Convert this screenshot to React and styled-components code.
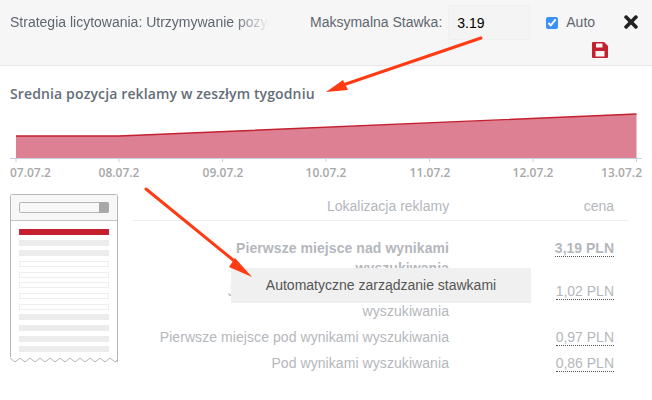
import React from 'react'
import styled, { createGlobalStyle } from 'styled-components'
import { FaTimes } from 'react-icons/fa'

const GlobalStyle = createGlobalStyle`
  html, body { margin: 0; background: #fff; }
  body { font-family: "Liberation Sans", Arial, sans-serif; }
`

const ticks = [
  { x: 16, label: '07.07.2', anchor: 'start', labelX: 10 },
  { x: 119, label: '08.07.2', anchor: 'middle', labelX: 119 },
  { x: 222.5, label: '09.07.2', anchor: 'middle', labelX: 223 },
  { x: 326, label: '10.07.2', anchor: 'middle', labelX: 326 },
  { x: 429.5, label: '11.07.2', anchor: 'middle', labelX: 430 },
  { x: 533, label: '12.07.2', anchor: 'middle', labelX: 533 },
  { x: 636.5, label: '13.07.2', anchor: 'end', labelX: 642 },
]

const thumbRows = ['red', 'gray', 'gray', 'line', 'line', 'line', 'line', 'line', 'gray', 'gray', 'gray', 'gray']

const rows = [
  { place: 'Pierwsze miejsce nad wynikami wyszukiwania', price: '3,19 PLN', strong: true },
  { place: 'Jakiekolwiek miejsce nad wynikami wyszukiwania', price: '1,02 PLN' },
  { place: 'Pierwsze miejsce pod wynikami wyszukiwania', price: '0,97 PLN' },
  { place: 'Pod wynikami wyszukiwania', price: '0,86 PLN' },
]

function App() {
  return (
    <Page>
      <GlobalStyle />
      <Header>
        <Strategy>Strategia licytowania: Utrzymywanie pozycji</Strategy>
        <BidLabel>Maksymalna Stawka:</BidLabel>
        <BidInput defaultValue="3.19" />
        <AutoColumn>
          <AutoLabel>
            <AutoCheck type="checkbox" defaultChecked />
            Auto
          </AutoLabel>
          <SaveIcon viewBox="0 0 16 16">
            <path
              fillRule="evenodd"
              d="M1 0H12L16 4V15a1 1 0 0 1-1 1H1a1 1 0 0 1-1-1V1a1 1 0 0 1 1-1ZM4 1.5V5.5H10.5V1.5ZM3.5 9V14.5H12.5V9Z"
            />
          </SaveIcon>
        </AutoColumn>
        <CloseIcon />
      </Header>

      <Title>Srednia pozycja reklamy w zeszłym tygodniu</Title>

      <Chart width="652" height="81" viewBox="0 101 652 81">
        <polygon points="16,136 119,136 636.5,114 636.5,158 16,158" fill="#dd8093" />
        <polyline points="16,136 119,136 636.5,114" fill="none" stroke="#c4202f" strokeWidth="1.4" />
        <line x1="10" y1="158.5" x2="642" y2="158.5" stroke="#c6d0e8" />
        {ticks.map((t) => (
          <g key={t.label}>
            <line x1={t.x} y1="158" x2={t.x} y2="162" stroke="#c6d0e8" />
            <AxisText x={t.labelX} y="177" textAnchor={t.anchor}>{t.label}</AxisText>
          </g>
        ))}
      </Chart>

      <Lower>
        <Thumb>
          <ThumbHead>
            <ThumbSearch><ThumbButton /></ThumbSearch>
          </ThumbHead>
          <ThumbBody>
            {thumbRows.map((kind, i) => <ThumbRow key={i} $kind={kind} />)}
          </ThumbBody>
          <Zigzag width="107" height="6" viewBox="0 0 107 6">
            <polyline
              points="0,1 5,5 10,1 15,5 20,1 25,5 30,1 35,5 40,1 45,5 50,1 55,5 60,1 65,5 70,1 75,5 80,1 85,5 90,1 95,5 100,1 105,5 107,3"
              fill="none"
              stroke="#b5b5b5"
            />
          </Zigzag>
        </Thumb>

        <Table>
          <TableHead>
            <span>Lokalizacja reklamy</span>
            <span>cena</span>
          </TableHead>
          {rows.map((r) => (
            <Row key={r.price} $strong={r.strong}>
              <Place>{r.place}</Place>
              <PriceCell><Price>{r.price}</Price></PriceCell>
            </Row>
          ))}
          <Tooltip>Automatyczne zarządzanie stawkami</Tooltip>
        </Table>
      </Lower>

      <Arrows width="652" height="400" viewBox="0 0 652 400">
        <line x1="481" y1="38" x2="340" y2="86" stroke="#ff3b14" strokeWidth="3" strokeLinecap="round" />
        <polygon points="326,92 343,80 348,90" fill="#ff3b14" />
        <line x1="146" y1="189" x2="238" y2="264" stroke="#ff3b14" strokeWidth="3" strokeLinecap="round" />
        <polygon points="252,277 235,258 229,267" fill="#ff3b14" />
      </Arrows>
    </Page>
  )
}

const Page = styled.div`
  position: relative;
  width: 652px;
  height: 400px;
  overflow: hidden;
  background: #fff;
`

const Header = styled.header`
  display: flex;
  align-items: flex-start;
  box-sizing: border-box;
  height: 66px;
  padding: 5px 14px 0 10px;
  background: #f6f6f6;
  border-bottom: 1px solid #e8e8e8;
`

const Strategy = styled.div`
  flex: none;
  width: 260px;
  margin-top: 9px;
  font-size: 14px;
  line-height: 17px;
  color: #5f6670;
  white-space: nowrap;
  overflow: hidden;
  mask-image: linear-gradient(to right, #000 86%, transparent 100%);
`

const BidLabel = styled.label`
  flex: none;
  margin: 9px 6px 0 40px;
  font-size: 14px;
  line-height: 17px;
  color: #5f6670;
  white-space: nowrap;
`

const BidInput = styled.input`
  flex: none;
  box-sizing: border-box;
  width: 82px;
  height: 35px;
  padding: 0 8px;
  background: #f4f4f4;
  border: 1px solid #efefef;
  border-radius: 3px;
  font: 14px "Liberation Sans", Arial, sans-serif;
  color: #000;
  outline: none;
`

const AutoColumn = styled.div`
  flex: none;
  display: flex;
  flex-direction: column;
  width: 78px;
  margin-left: 16px;
`

const AutoLabel = styled.label`
  display: flex;
  align-items: center;
  gap: 8px;
  margin-top: 9px;
  font-size: 14px;
  line-height: 17px;
  color: #5f6670;
`

const AutoCheck = styled.input`
  width: 12px;
  height: 12px;
  margin: 0;
  accent-color: #3b8ff6;
`

const SaveIcon = styled.svg`
  width: 16px;
  height: 16px;
  margin: 11px 0 0 46px;
  fill: #c4202f;
`

const CloseIcon = styled(FaTimes)`
  flex: none;
  width: 14px;
  height: 20px;
  margin-top: 7px;
  color: #222;
`

const Title = styled.h2`
  margin: 0;
  padding: 20px 10px 0;
  font: 600 14px/15px "Open Sans", sans-serif;
  letter-spacing: 0.13px;
  color: #646d78;
`

const Chart = styled.svg`
  display: block;
`

const AxisText = styled.text`
  font: 600 12px "Open Sans", sans-serif;
  fill: #a8a8a8;
`

const Lower = styled.div`
  display: flex;
  align-items: flex-start;
  gap: 15px;
  padding: 12px 0 0 10px;
`

const Thumb = styled.div`
  position: relative;
  flex: none;
  box-sizing: border-box;
  width: 108px;
  height: 168px;
  border: 1px solid #b5b5b5;
  border-bottom: 0;
  border-radius: 3px 3px 0 0;
`

const ThumbHead = styled.div`
  box-sizing: border-box;
  height: 26px;
  padding: 7px 8px 0;
  background: #f7f7f7;
  border-bottom: 1px solid #c4c4c4;
`

const ThumbSearch = styled.div`
  display: flex;
  justify-content: flex-end;
  box-sizing: border-box;
  height: 11px;
  background: #f7f7f7;
  border: 1px solid #b5b5b5;
  border-radius: 2px;
`

const ThumbButton = styled.div`
  width: 10px;
  margin: -1px -1px -1px 0;
  background: #a9a9a9;
  border-radius: 0 2px 2px 0;
`

const ThumbBody = styled.div`
  display: flex;
  flex-direction: column;
  gap: 4.67px;
  padding: 8px 8px 0;
`

const thumbColors = {
  red: 'background: #c4202f;',
  gray: 'background: #ececec;',
  line: 'background: #fff; border: 1px solid #eee;',
}

const ThumbRow = styled.div`
  box-sizing: border-box;
  height: 6px;
  ${(p) => thumbColors[p.$kind]}
`

const Zigzag = styled.svg`
  position: absolute;
  left: -1px;
  bottom: -1px;
  background: #fff;
`

const Table = styled.div`
  position: relative;
  flex: none;
  width: 496px;
  font-size: 14px;
  color: #b4b7bc;
`

const TableHead = styled.div`
  display: flex;
  justify-content: space-between;
  box-sizing: border-box;
  height: 27px;
  padding: 4px 15px 0 194px;
  line-height: 16px;
  border-bottom: 1px solid #eee;
`

const Row = styled.div`
  display: grid;
  grid-template-columns: 316px 165px;
  padding: ${(p) => (p.$strong ? '17px 0 0' : '3px 0')};
  line-height: 20px;
  font-weight: ${(p) => (p.$strong ? 700 : 400)};
`

const Place = styled.div`
  padding-left: 16px;
  text-align: right;
  letter-spacing: 0.07px;
`

const PriceCell = styled.div`
  text-align: right;
`

const Price = styled.span`
  display: inline-block;
  line-height: 15px;
  border-bottom: 1px dotted #555;
`

const Tooltip = styled.div`
  position: absolute;
  left: 98px;
  top: 74px;
  width: 300px;
  height: 35px;
  background: #f0f0f0;
  font-size: 14px;
  line-height: 35px;
  text-align: center;
  color: #555;
`

const Arrows = styled.svg`
  position: absolute;
  left: 0;
  top: 0;
  pointer-events: none;
`

export default App
